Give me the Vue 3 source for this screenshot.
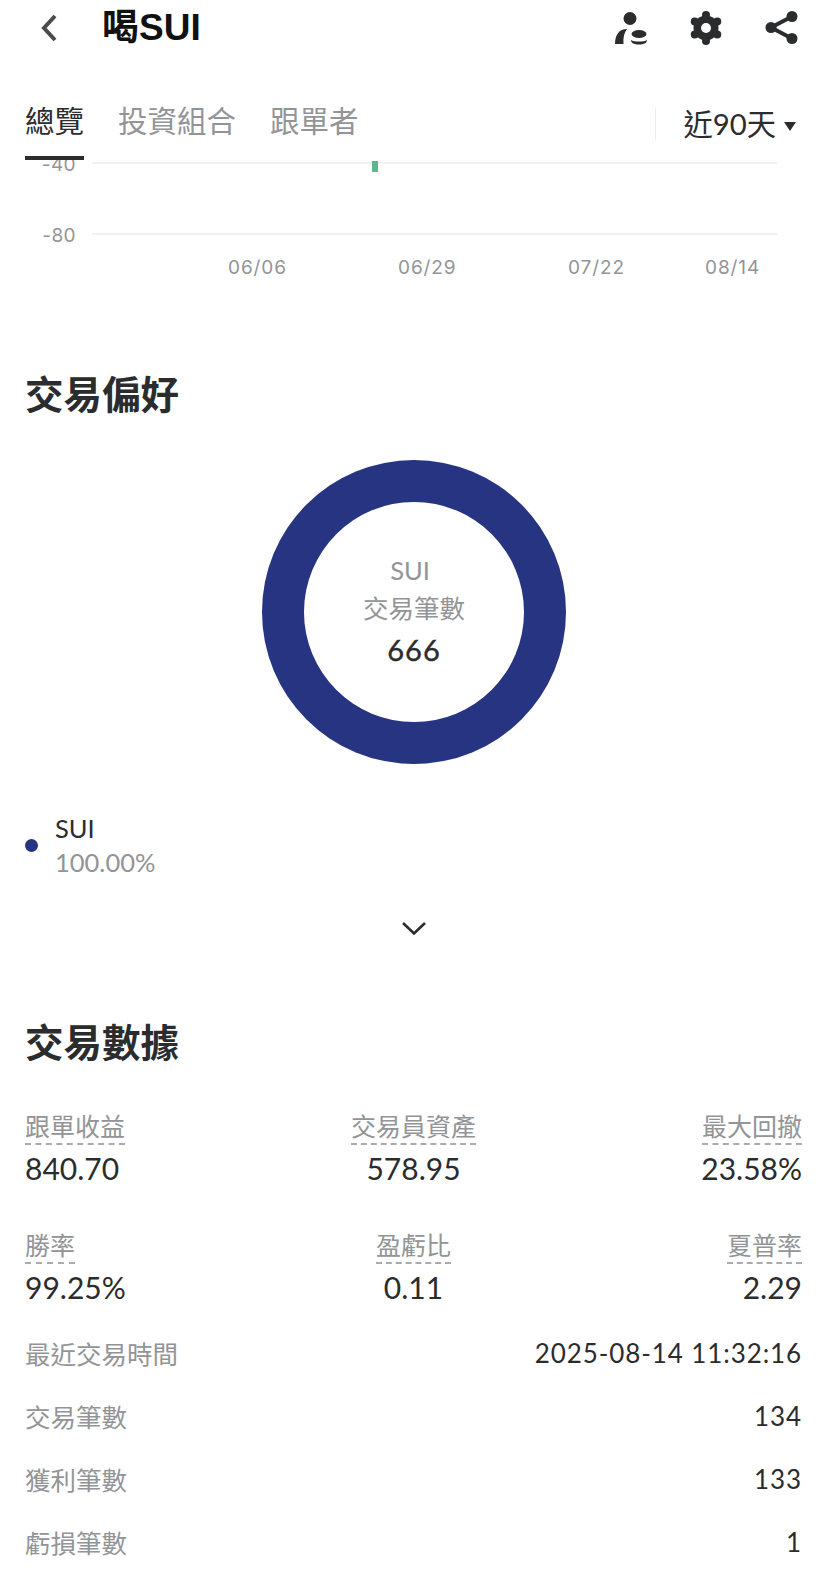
<script setup>
const tabs = ['投資組合', '跟單者']
const axis = ['06/06', '06/29', '07/22', '08/14']
const ticks = ['-40', '-80']
const stats = [
  { label: '跟單收益', value: '840.70' },
  { label: '交易員資產', value: '578.95' },
  { label: '最大回撤', value: '23.58%' },
  { label: '勝率', value: '99.25%' },
  { label: '盈虧比', value: '0.11' },
  { label: '夏普率', value: '2.29' },
]
const rows = [
  { label: '最近交易時間', value: '2025-08-14 11:32:16' },
  { label: '交易筆數', value: '134' },
  { label: '獲利筆數', value: '133' },
  { label: '虧損筆數', value: '1' },
]
// bumps of the settings gear, six around the centre
const gearBumps = [-90, -30, 30, 90, 150, 210].map((deg) => ({
  x: 17 + 13 * Math.cos((deg * Math.PI) / 180),
  y: 17 + 13 * Math.sin((deg * Math.PI) / 180),
}))
</script>

<template>
  <div class="page">
    <header class="topbar">
      <svg class="back" width="20" height="30" viewBox="0 0 20 30">
        <path d="M17 3 L6 15 L17 27" fill="none" stroke="#4a4b4d" stroke-width="4" />
      </svg>
      <h1 class="title">喝SUI</h1>
      <div class="actions">
        <svg width="34" height="34" viewBox="0 0 34 34">
          <circle cx="16" cy="7.5" r="6.5" fill="#2b2c2e" />
          <path d="M1 33 C1 24 5 18 13 18 C10 22 9 27 9.500 33 Z" fill="#2b2c2e" />
          <ellipse cx="25" cy="23" rx="7.500" ry="4" fill="#2b2c2e" />
          <path d="M17 29 C20 31 30 31 33 29 C33 32 30 33.500 25 33.500 C20 33.500 17 32 17 29 Z" fill="#2b2c2e" />
        </svg>
        <svg width="34" height="34" viewBox="0 0 34 34">
          <circle cx="17" cy="17" r="12.500" fill="#2b2c2e" />
          <circle v-for="(b, i) in gearBumps" :key="i" :cx="b.x" :cy="b.y" r="4" fill="#2b2c2e" />
          <circle cx="17" cy="17" r="5" fill="#fff" />
        </svg>
        <svg width="34" height="34" viewBox="0 0 34 34">
          <g fill="#2b2c2e">
            <circle cx="28" cy="5.500" r="5.500" />
            <circle cx="28" cy="27.500" r="5.500" />
            <circle cx="7" cy="16.500" r="5.500" />
          </g>
          <path d="M28 5.500 L7 16.500 L28 27.500" fill="none" stroke="#2b2c2e" stroke-width="4" />
        </svg>
      </div>
    </header>

    <nav class="tabs">
      <span class="tab active">總覽</span>
      <span v-for="t in tabs" :key="t" class="tab">{{ t }}</span>
      <div class="range">
        <span>近90天</span>
        <i class="caret"></i>
      </div>
    </nav>

    <section class="chart">
      <div class="plot">
        <div v-for="t in ticks" :key="t" class="line-row">
          <span class="tick">{{ t }}</span>
          <div class="rule"></div>
        </div>
        <i class="candle"></i>
      </div>
      <div class="axis">
        <span v-for="a in axis" :key="a">{{ a }}</span>
      </div>
    </section>

    <h2 class="heading pref">交易偏好</h2>
    <div class="donut-wrap">
      <div class="donut">
        <div class="hole">
          <span class="d-label d-sym">SUI</span>
          <span class="d-label">交易筆數</span>
          <span class="d-num">666</span>
        </div>
      </div>
    </div>

    <div class="legend">
      <i class="dot"></i>
      <div class="legend-text">
        <span class="l-name">SUI</span>
        <span class="l-pct">100.00%</span>
      </div>
    </div>

    <div class="expand">
      <svg width="26" height="16" viewBox="0 0 26 16">
        <path d="M2 3 L13 13.500 L24 3" fill="none" stroke="#2b2c2e" stroke-width="2.600" />
      </svg>
    </div>

    <h2 class="heading data">交易數據</h2>
    <div class="stats">
      <div v-for="s in stats" :key="s.label" class="stat">
        <span class="s-label">{{ s.label }}</span>
        <span class="s-value">{{ s.value }}</span>
      </div>
    </div>
    <div class="rows">
      <div v-for="r in rows" :key="r.label" class="row">
        <span class="r-label">{{ r.label }}</span>
        <span class="r-value">{{ r.value }}</span>
      </div>
    </div>
  </div>
</template>

<style>
html, body { background: #fff; }
</style>

<style scoped>
.page {
  width: 828px;
  height: 1572px;
  overflow: hidden;
  background: #fff;
  font-family: "Lato", "Noto Sans CJK TC", sans-serif;
  color: #2b2c2e;
}

.topbar {
  height: 56px;
  display: flex;
  align-items: center;
  padding-left: 38px;
  padding-right: 30px;
}
.back { flex: none; }
.title {
  margin: 0 0 0 44px;
  font: 700 37px/44px "Liberation Sans", "Noto Sans CJK TC", sans-serif;
  color: #111;
}
.actions {
  margin-left: auto;
  display: flex;
  align-items: center;
  gap: 41px;
}

.tabs {
  margin-top: 44px;
  height: 60px;
  display: flex;
  align-items: flex-start;
  gap: 34px;
  padding: 0 32px 0 25px;
}
.tab {
  font-size: 29.500px;
  line-height: 42px;
  color: #929497;
  padding-bottom: 14px;
  border-bottom: 4px solid transparent;
}
.tab.active {
  color: #2b2c2e;
  border-bottom-color: #2b2c2e;
}
.range {
  margin-left: auto;
  margin-top: 8px;
  display: flex;
  align-items: center;
  gap: 8px;
  height: 32px;
  padding-left: 27px;
  border-left: 1px solid #ececec;
  font-size: 29.300px;
  line-height: 32px;
}
.caret {
  width: 0;
  height: 0;
  border-left: 6px solid transparent;
  border-right: 6px solid transparent;
  border-top: 9px solid #2b2c2e;
  margin-top: 4px;
}

.chart {
  overflow: hidden;
}
.plot {
  position: relative;
  display: flex;
  flex-direction: column;
  gap: 51px;
  padding-right: 51px;
}
.line-row {
  height: 20px;
  display: flex;
  align-items: center;
}
.line-row:first-child {
  margin-top: -7px;
}
.tick {
  width: 76px;
  flex: none;
  margin-top: 3px;
  text-align: right;
  font: 19px/20px "Inter", sans-serif;
  letter-spacing: 0.4px;
  color: #929497;
}
.rule {
  flex: 1;
  height: 2px;
  margin-left: 16px;
  background: #f1f1f2;
}
.candle {
  position: absolute;
  left: 372px;
  top: 1px;
  width: 6px;
  height: 11px;
  background: #5fb78c;
}
.axis {
  display: grid;
  grid-template-columns: 170px 170px 137px auto;
  padding-left: 228px;
  height: 30px;
  margin-top: 9px;
  font: 19px/30px "Inter", sans-serif;
  letter-spacing: 0.9px;
  color: #929497;
}

.heading {
  margin: 0;
  padding-left: 25px;
  font-size: 38.500px;
  line-height: 50px;
  font-weight: 700;
  color: #2b2c2e;
}
.pref { margin-top: 86px; }
.donut-wrap {
  margin-top: 41px;
  display: flex;
  justify-content: center;
}
.donut {
  width: 304px;
  height: 304px;
  border-radius: 50%;
  background: #263482;
  display: flex;
  align-items: center;
  justify-content: center;
}
.hole {
  width: 220px;
  height: 220px;
  border-radius: 50%;
  background: #fff;
  display: flex;
  flex-direction: column;
  align-items: center;
  padding-top: 49px;
  box-sizing: border-box;
}
.d-label {
  font-size: 25.500px;
  line-height: 38px;
  color: #929497;
}
.d-sym {
  margin-right: 8px;
}
.d-num {
  margin-top: 2px;
  font-size: 29px;
  line-height: 42px;
  letter-spacing: 1px;
  -webkit-text-stroke: 0.4px #2b2c2e;
}

.legend {
  margin-top: 47px;
  padding-left: 25px;
  display: flex;
  align-items: center;
  gap: 17px;
}
.dot {
  width: 13px;
  height: 13px;
  border-radius: 50%;
  background: #263482;
}
.legend-text {
  display: flex;
  flex-direction: column;
}
.l-name {
  font-size: 25.500px;
  line-height: 34px;
}
.l-pct {
  font-size: 25.500px;
  line-height: 34px;
  color: #929497;
}

.expand {
  margin-top: 34px;
  height: 30px;
  display: flex;
  justify-content: center;
  align-items: center;
}

.data { margin-top: 74px; }
.stats {
  margin-top: 43px;
  padding: 0 26px 0 25px;
  display: grid;
  grid-template-columns: repeat(3, 1fr);
  grid-auto-rows: 119px;
}
.stat {
  display: flex;
  flex-direction: column;
  gap: 5px;
  align-items: center;
}
.stat:nth-child(3n + 1) { align-items: flex-start; }
.stat:nth-child(3n) { align-items: flex-end; }
.s-label {
  font-size: 25px;
  line-height: 33px;
  color: #929497;
  border-bottom: 2px dashed #a9abae;
}
.s-value {
  font-size: 30px;
  line-height: 36px;
  color: #2b2c2e;
}

.rows {
  margin-top: -27px;
  padding: 0 26px 0 25px;
}
.row {
  height: 63px;
  display: flex;
  align-items: center;
  justify-content: space-between;
}
.r-label {
  font-size: 25.500px;
  color: #929497;
}
.r-value {
  font-size: 26px;
  letter-spacing: 0.9px;
  color: #2b2c2e;
}
</style>
